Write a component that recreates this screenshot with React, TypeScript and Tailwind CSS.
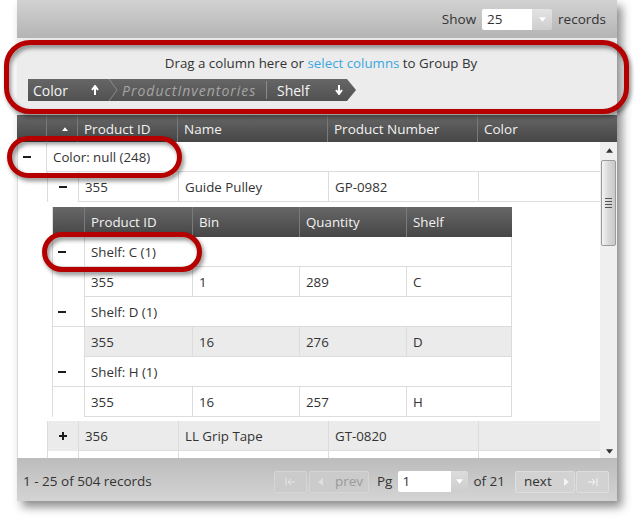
import React from 'react'

function Minus() {
    return <span className="block w-[8px] h-[2px] bg-[#1c1c1c]" />
}

function Plus() {
    return (
        <span className="relative block w-[8px] h-[8px]">
            <span className="absolute left-0 top-[3px] w-[8px] h-[2px] bg-[#1c1c1c]" />
            <span className="absolute left-[3px] top-0 w-[2px] h-[8px] bg-[#1c1c1c]" />
        </span>
    )
}

function Tri({ down = false, color = '#ffffff', size = 7 }: { down?: boolean; color?: string; size?: number }) {
    return (
        <svg width={size} height={size - 2} viewBox="0 0 8 5">
            <path d={down ? 'M0 0 L8 0 L4 5 Z' : 'M0 5 L8 5 L4 0 Z'} fill={color} />
        </svg>
    )
}

function Arrow({ down = false }: { down?: boolean }) {
    return (
        <svg width="8" height="10" viewBox="0 0 8 10">
            {down ? (
                <path d="M4 0 V8 M1 5 L4 9 L7 5" stroke="#fff" strokeWidth="2" fill="none" />
            ) : (
                <path d="M4 10 V2 M1 5 L4 1 L7 5" stroke="#fff" strokeWidth="2" fill="none" />
            )}
        </svg>
    )
}

const hcell = 'h-full flex items-center pl-[6px] pt-[1px] border-l border-[#7a7a7a] text-[#f2f2f2]'
const cell = 'h-full flex items-center pl-[6px] pt-[2px] border-l border-b border-[#dcdcdc]'

function ParentRow({ id, name, num, open, alt }: { id: string; name: string; num: string; open: boolean; alt?: boolean }) {
    return (
        <div className="flex h-[30px] shrink-0">
            <div className="w-[29px]" />
            <div className={`flex flex-1 ${alt ? 'bg-[#ebebeb]' : 'bg-white'}`}>
                <div className="w-[31px] h-full flex items-center justify-center border-l border-[#dcdcdc]">{open ? <Minus /> : <Plus />}</div>
                <div className={`${cell} w-[100px]`}>{id}</div>
                <div className={`${cell} w-[150px]`}>{name}</div>
                <div className={`${cell} w-[150px]`}>{num}</div>
                <div className={`${cell} flex-1`} />
            </div>
        </div>
    )
}

function ShelfGroup({ label }: { label: string }) {
    return (
        <div className="flex h-[30px]">
            <div className="w-[31px] h-full flex items-center pl-[5px] border-b border-[#dcdcdc]"><Minus /></div>
            <div className={`${cell} flex-1 border-r`}>{label}</div>
        </div>
    )
}

function ShelfRow({ bin, qty, shelf, alt }: { bin: string; qty: string; shelf: string; alt?: boolean }) {
    return (
        <div className="flex h-[30px]">
            <div className="w-[31px] h-full" />
            <div className={`flex flex-1 ${alt ? 'bg-[#ebebeb]' : 'bg-white'}`}>
                <div className={`${cell} w-[108px]`}>355</div>
                <div className={`${cell} w-[107px]`}>{bin}</div>
                <div className={`${cell} w-[107px]`}>{qty}</div>
                <div className={`${cell} flex-1 border-r`}>{shelf}</div>
            </div>
        </div>
    )
}

export default function App() {
    return (
        <div className="relative w-[637px] h-[522px] overflow-hidden bg-white font-['Open_Sans',sans-serif] text-[13px] text-[#333]">
            <div className="ml-[17px] w-[600px] h-[501px] flex flex-col shadow-[5px_6px_9px_rgba(0,0,0,0.45)]">
                {/* toolbar */}
                <div className="h-[38px] shrink-0 flex items-center justify-end pr-[11px] bg-gradient-to-b from-[#d2d2d2] to-[#b4b4b4] text-[13.5px]">
                    <span className="mr-[6px]">Show</span>
                    <div className="flex h-[21px] w-[70px] rounded-[2px] overflow-hidden">
                        <div className="w-[50px] bg-white flex items-center pl-[5px]">25</div>
                        <div className="flex-1 flex items-center justify-center bg-gradient-to-b from-[#e4e4e4] to-[#cdcdcd]"><Tri down /></div>
                    </div>
                    <span className="ml-[6px]">records</span>
                </div>

                {/* group by area */}
                <div className="h-[77px] shrink-0 bg-[#ececec] pt-[15px] pl-[11px]">
                    <div className="h-[20px] leading-[20px] text-center text-[13.3px] pl-[8px] pr-[11px]">
                        Drag a column here or <span className="text-[#3ba7e0]">select columns</span> to Group By
                    </div>
                    <div className="mt-[6px] flex h-[22px] w-[328px] text-[14px] bg-gradient-to-b from-[#666] to-[#515151] [clip-path:polygon(0_0,calc(100%-9px)_0,100%_50%,calc(100%-9px)_100%,0_100%)]">
                        <div className="w-[80px] flex items-center justify-between pl-[5px] pr-[9px] text-[#f4f4f4]">
                            <span>Color</span>
                            <Arrow />
                        </div>
                        <svg width="10" height="22" viewBox="0 0 10 22" className="shrink-0">
                            <path d="M1 0 L9 11 L1 22" stroke="#8a8a8a" fill="none" />
                        </svg>
                        <div className="w-[149px] flex items-center pl-[4px] italic text-[#a5a5a5] tracking-[1px] border-r border-[#8a8a8a] my-[2px] whitespace-nowrap">ProductInventories</div>
                        <div className="flex-1 flex items-center pl-[10px] text-[#f4f4f4]">
                            <span className="w-[58px]">Shelf</span>
                            <Arrow down />
                        </div>
                    </div>
                </div>

                {/* grid header */}
                <div className="h-[27px] shrink-0 flex bg-gradient-to-b from-[#676767] to-[#464646] text-[13.5px]">
                    <div className="w-[29px]" />
                    <div className={`${hcell} w-[31px] justify-center pl-0`}><Tri size={6} /></div>
                    <div className={`${hcell} w-[100px]`}>Product ID</div>
                    <div className={`${hcell} w-[150px]`}>Name</div>
                    <div className={`${hcell} w-[150px]`}>Product Number</div>
                    <div className={`${hcell} flex-1`}>Color</div>
                </div>

                {/* body */}
                <div className="h-[316px] shrink-0 flex bg-white text-[13.3px]">
                    <div className="flex-1 flex flex-col overflow-hidden border-l border-[#dcdcdc]">
                        <div className="flex h-[30px] shrink-0">
                            <div className="w-[28px] flex items-center pl-[5px]"><Minus /></div>
                            <div className={`${cell} flex-1`}>Color: null (248)</div>
                        </div>
                        <ParentRow id="355" name="Guide Pulley" num="GP-0982" open />

                        <div className="shrink-0 pl-[34px] pt-[5px] pb-[4px]">
                            <div className="w-[460px] border-l border-[#dcdcdc]">
                                <div className="flex h-[30px] bg-gradient-to-b from-[#676767] to-[#464646]">
                                    <div className="w-[31px]" />
                                    <div className={`${hcell} w-[108px]`}>Product ID</div>
                                    <div className={`${hcell} w-[107px]`}>Bin</div>
                                    <div className={`${hcell} w-[107px]`}>Quantity</div>
                                    <div className={`${hcell} flex-1`}>Shelf</div>
                                </div>
                                <ShelfGroup label="Shelf: C (1)" />
                                <ShelfRow bin="1" qty="289" shelf="C" />
                                <ShelfGroup label="Shelf: D (1)" />
                                <ShelfRow bin="16" qty="276" shelf="D" alt />
                                <ShelfGroup label="Shelf: H (1)" />
                                <ShelfRow bin="16" qty="257" shelf="H" />
                            </div>
                        </div>

                        <ParentRow id="356" name="LL Grip Tape" num="GT-0820" open={false} alt />
                        <ParentRow id="" name="" num="" open={false} />
                    </div>

                    {/* scrollbar */}
                    <div className="w-[17px] bg-[#efefef] flex flex-col items-center">
                        <div className="h-[17px] flex items-center justify-center pl-[1px]"><Tri color="#333" size={7} /></div>
                        <div className="w-[15px] h-[86px] mt-[1px] rounded-[2px] border border-[#9a9a9a] bg-gradient-to-r from-[#f4f4f4] via-[#d8d8d8] to-[#c9c9c9] flex flex-col items-center justify-center gap-[2px]">
                            <span className="block w-[7px] h-px bg-[#555]" />
                            <span className="block w-[7px] h-px bg-[#555]" />
                            <span className="block w-[7px] h-px bg-[#555]" />
                            <span className="block w-[7px] h-px bg-[#555]" />
                        </div>
                        <div className="flex-1" />
                        <div className="h-[14px] flex items-center justify-center pl-[1px]"><Tri down color="#333" size={7} /></div>
                    </div>
                </div>

                {/* footer */}
                <div className="h-[43px] shrink-0 flex items-center pt-[4px] pl-[6px] pr-[8px] bg-gradient-to-b from-[#bcbcbc] to-[#d4d4d4] text-[13.5px]">
                    <span>1 - 25 of 504 records</span>
                    <div className="ml-auto flex items-center">
                        <div className="w-[33px] h-[22px] rounded-[2px] border border-[#d6d6d6] bg-[#cbcbcb] flex items-center justify-center">
                            <svg width="10" height="8" viewBox="0 0 10 8"><path d="M1 0 V8 M10 4 H3 M6 1 L3 4 L6 7" stroke="#e4e4e4" strokeWidth="1" fill="none" /></svg>
                        </div>
                        <div className="ml-[2px] w-[60px] h-[22px] rounded-[2px] border border-[#d6d6d6] bg-[#cbcbcb] flex items-center pl-[8px] gap-[12px] text-[#9a9a9a]">
                            <svg width="5" height="8" viewBox="0 0 5 8"><path d="M5 0 L0 4 L5 8 Z" fill="#dedede" /></svg>
                            <span>prev</span>
                        </div>
                        <span className="ml-[8px]">Pg</span>
                        <div className="ml-[6px] flex h-[21px] w-[70px] rounded-[2px] overflow-hidden">
                            <div className="w-[53px] bg-white flex items-center pl-[4px]">1</div>
                            <div className="flex-1 flex items-center justify-center bg-gradient-to-b from-[#dcdcdc] to-[#cdcdcd]"><Tri down /></div>
                        </div>
                        <span className="ml-[5px]">of 21</span>
                        <div className="ml-[10px] w-[60px] h-[22px] rounded-[2px] border border-[#dedede] bg-[#d2d2d2] flex items-center pl-[8px] gap-[12px] text-[#333]">
                            <span>next</span>
                            <svg width="5" height="8" viewBox="0 0 5 8"><path d="M0 0 L5 4 L0 8 Z" fill="#f4f4f4" /></svg>
                        </div>
                        <div className="ml-[1px] w-[33px] h-[22px] rounded-[2px] border border-[#dedede] bg-[#d2d2d2] flex items-center justify-center">
                            <svg width="10" height="8" viewBox="0 0 10 8"><path d="M9 0 V8 M0 4 H7 M4 1 L7 4 L4 7" stroke="#f6f6f6" strokeWidth="1" fill="none" /></svg>
                        </div>
                    </div>
                </div>
            </div>

            {/* callout highlights */}
            <div className="absolute left-[4px] top-[40px] w-[625px] h-[74px] rounded-[26px] border-[5px] border-[#b60000] drop-shadow-[2px_3px_2px_rgba(0,0,0,0.45)]" />
            <div className="absolute left-[7px] top-[136px] w-[175px] h-[42px] rounded-full border-[5px] border-[#b60000] drop-shadow-[2px_3px_2px_rgba(0,0,0,0.45)]" />
            <div className="absolute left-[42px] top-[232px] w-[160px] h-[40px] rounded-full border-[5px] border-[#b60000] drop-shadow-[2px_3px_2px_rgba(0,0,0,0.45)]" />
        </div>
    )
}
